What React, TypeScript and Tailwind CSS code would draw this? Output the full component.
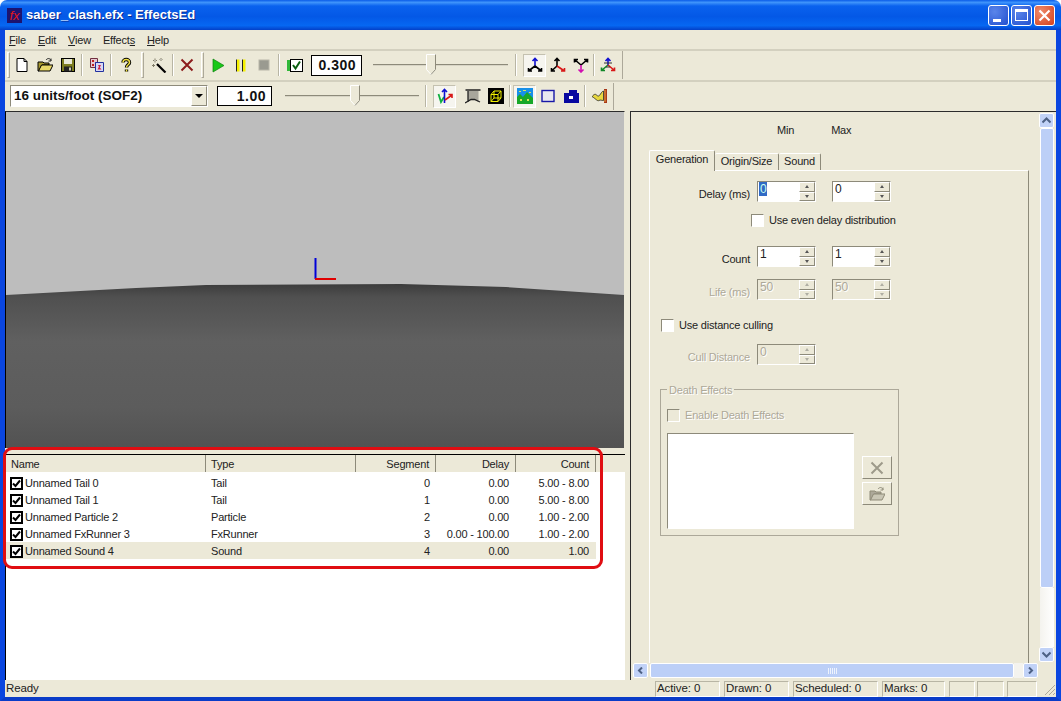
import type { ReactNode } from "react";

const disabledText = "text-[#aca899] [text-shadow:1px_1px_0_#fff]";

function Svg({ children }: { children: ReactNode }) {
  return (
    <svg width="16" height="16" viewBox="0 0 16 16" fill="none">
      {children}
    </svg>
  );
}

/* toolbar button icons */
const NewIcon = () => (
  <Svg>
    <path d="M3 1.500h7l3 3v10H3z" fill="#fff" stroke="#000" />
    <path d="M10 1.500v3h3" stroke="#000" />
  </Svg>
);
const OpenIcon = ({ gray }: { gray?: boolean }) => (
  <Svg>
    <path d="M1 14V5h5l1 1h5v2H5l-3 6z" fill={gray ? "#aca899" : "#a89a30"} stroke={gray ? "#8f8b78" : "#000"} />
    <path d="M1.500 14 4.500 8H16l-3 6z" fill={gray ? "#c9c6b5" : "#e8d868"} stroke={gray ? "#8f8b78" : "#000"} />
    <path d="M9 3c1.500-2 4-2 5 .5M14 1.500v2.500h-2.500" stroke={gray ? "#8f8b78" : "#222"} />
  </Svg>
);
const SaveIcon = () => (
  <Svg>
    <rect x="1.500" y="1.500" width="13" height="13" fill="#7d7d20" stroke="#000" />
    <rect x="4" y="2" width="8" height="5" fill="#e8e8d8" />
    <rect x="4" y="9.500" width="8" height="5" fill="#222" />
    <rect x="9" y="10.500" width="2" height="3" fill="#c8c8a8" />
  </Svg>
);
const CopyIcon = () => (
  <Svg>
    <path d="M1.500 1.500h7v9h-7z" fill="#e8c8d0" stroke="#703040" />
    <path d="M3 3h2v2H3zM6 5h1.500v2H6zM3 7h2v2H3z" fill="#c02020" />
    <path d="M6.500 5.500h8v9h-8z" fill="#d8d8f4" stroke="#2030a0" />
    <path d="M9 8h3l-1.500 3z M10 9.500l2.500 3h-4z" fill="#d02040" />
  </Svg>
);
const HelpIcon = () => (
  <Svg>
    <path d="M5 5.500C5 1.500 11.500 1.500 11.500 5.500 11.500 8 8.500 7.500 8.500 10.500M8.500 12.500v2" stroke="#000" strokeWidth="3.400" />
    <path d="M5 5.500C5 1.500 11.500 1.500 11.500 5.500 11.500 8 8.500 7.500 8.500 10.500M8.500 12.500v2" stroke="#f0e040" strokeWidth="1.500" />
  </Svg>
);
const WandIcon = () => (
  <Svg>
    <path d="M6 7l8.500 8.500" stroke="#000" strokeWidth="2.200" />
    <path d="M4 1.500v4M2 3.500h4M10 1v3M8.500 2.500h3M1 8.500h3M2.500 7v3" stroke="#807c68" />
    <path d="M4 3v1M10 2v1" stroke="#fff" />
  </Svg>
);
const CrossIcon = ({ gray }: { gray?: boolean }) => (
  <Svg>
    <path d="M2.500 2.500l11 11M13.500 2.500l-11 11" stroke={gray ? "#9d9a8a" : "#8c1c1c"} strokeWidth="2" />
  </Svg>
);
const PlayIcon = () => (
  <Svg>
    <path d="M3 2l11 6.500L3 15z" fill="#18c818" stroke="#108010" strokeWidth=".7" />
  </Svg>
);
const PauseIcon = () => (
  <Svg>
    <path d="M4 2.500h2.500v12H4zM10 2.500h2.500v12H10z" fill="#f4f000" />
    <path d="M3.500 2.500v12M9.500 2.500v12" stroke="#222" />
  </Svg>
);
const StopIcon = () => (
  <Svg>
    <rect x="3" y="3" width="10" height="10" fill="#9a9a90" stroke="#b8b6a8" />
  </Svg>
);
const CheckIcon = () => (
  <Svg>
    <rect x="0" y="3" width="5" height="11" fill="#30b838" />
    <rect x="3.500" y="2.500" width="12" height="12" fill="#fff" stroke="#000" />
    <path d="M6 8l2.500 3.500L13 4.500" stroke="#0a6010" strokeWidth="2" />
  </Svg>
);
const AxisA = () => (
  <Svg>
    <path d="M8 9V1.500M5.500 4 8 1.500 10.500 4" stroke="#1010d0" strokeWidth="1.600" />
    <path d="M8 9 1.500 14M8 9l6.500 5M1.500 11v3h3.500M14.500 11v3H11" stroke="#000" strokeWidth="1.600" />
  </Svg>
);
const AxisB = () => (
  <Svg>
    <path d="M7 9V1.500M4.500 4 7 1.500 9.500 4M7 9 1.500 14M1.500 11v3H5" stroke="#000" strokeWidth="1.600" />
    <path d="M7 9l7.500 5M14.500 11v3H11" stroke="#d81818" strokeWidth="1.600" />
  </Svg>
);
const AxisC = () => (
  <Svg>
    <path d="M8 8 1.500 2.500M8 8l6.500-5.500M1.500 5.500v-3H5M14.500 5.500v-3H11" stroke="#000" strokeWidth="1.600" />
    <path d="M8 8v7M5.500 12.500 8 15l2.500-2.500" stroke="#d010b0" strokeWidth="1.600" />
  </Svg>
);
const AxisD = () => (
  <Svg>
    <path d="M8 8V1.500M5.500 4 8 1.500 10.500 4" stroke="#1010d0" strokeWidth="1.600" />
    <path d="M8 8 1.500 13.500M1.500 10.500v3H5" stroke="#108828" strokeWidth="1.600" />
    <path d="M8 8l6.500 5.500M14.500 10.500v3H11" stroke="#d81818" strokeWidth="1.600" />
    <path d="M4 6h8M6 10h4" stroke="#333" />
  </Svg>
);
const AxisE = () => (
  <Svg>
    <path d="M1.500 6 4 14 7 9" stroke="#10b040" strokeWidth="1.800" />
    <path d="M7.500 15V1.500M5 4 7.500 1.500 10 4" stroke="#1010d0" strokeWidth="1.600" />
    <path d="M8 12l7-5M11.500 6.500H15V10" stroke="#d81818" strokeWidth="1.600" />
  </Svg>
);
const WallIcon = () => (
  <Svg>
    <path d="M3 3h10.500v11L9.500 11.500H6L3 14z" fill="#a8a69c" />
    <path d="M.5 2h15M3 3v11M0 15l6-3.500h3.500L15 14" stroke="#222" strokeWidth="1.300" />
  </Svg>
);
const BoxIcon = () => (
  <Svg>
    <rect width="16" height="16" fill="#000" />
    <path d="M3 6.500h7v7H3zM6 3h7v7H6zM3 6.500 6 3M10 6.500 13 3M10 13.500l3-3.500M3 13.500 6 10" stroke="#f0f000" />
  </Svg>
);
const LandIcon = () => (
  <Svg>
    <rect width="16" height="16" fill="#1890e8" />
    <path d="M0 9l3-3 3 3 4-5 6 6v6H0z" fill="#18a828" />
    <path d="M2 3h2v1H2zM6 2h3v1H6zM12 4h2v1h-2zM3 11h2v2H3zM10 11h2v2h-2z" fill="#d8e858" />
  </Svg>
);
const FrameIcon = () => (
  <Svg>
    <rect x="2" y="2.500" width="12" height="11" fill="#e8e8f0" stroke="#1818a8" strokeWidth="1.400" />
  </Svg>
);
const BlobIcon = () => (
  <Svg>
    <path d="M1 5h5V2h8v3h2v10H1z" fill="#0808a0" />
    <rect x="6" y="8" width="4" height="3" fill="#fff" />
  </Svg>
);
const HillIcon = () => (
  <Svg>
    <path d="M0 8.500c2-2 3-3 4.500-1.500S7 8.500 8.500 6 11 3 11.500 3v9.500c-2 0-3-1-4.500 0S4 11 0 8.500z" fill="#e8d840" stroke="#222" strokeWidth=".8" />
    <path d="M12 1h3v14h-3z" fill="#a83818" />
    <path d="M13 2v12" stroke="#e8a040" />
  </Svg>
);

function Btn({ children, pressed }: { children: ReactNode; pressed?: boolean }) {
  return (
    <div
      className={`flex h-[23px] w-[23px] shrink-0 items-center justify-center ${
        pressed ? "border border-b-white border-l-[#c4c1b0] border-r-white border-t-[#c4c1b0] bg-[#f6f5ef]" : ""
      }`}
    >
      {children}
    </div>
  );
}

function Sep({ w }: { w: string }) {
  return (
    <div className={`flex h-[22px] shrink-0 justify-center ${w}`}>
      <div className="w-[2px] border-l border-r border-l-[#b8b5a4] border-r-white" />
    </div>
  );
}

function Grip({ w }: { w: string }) {
  return (
    <div className={`flex h-[26px] shrink-0 justify-center ${w}`}>
      <div className="w-[3px] border border-b-[#aca899] border-l-white border-r-[#aca899] border-t-white" />
    </div>
  );
}

function Slider({ width, thumb }: { width: string; thumb: string }) {
  return (
    <div className={`relative flex h-[22px] shrink-0 items-center ${width}`}>
      <div className="h-[2px] w-full border-b border-t border-b-[#d8d5c6] border-t-[#8d8a7a]" />
      <svg className={`absolute top-0 ${thumb}`} width="10" height="21" viewBox="0 0 10 21">
        <path d="M.5.5h9v15l-4.500 5-4.500-5z" fill="#ece9d8" stroke="#fff" />
        <path d="M9.500.5v15l-4.500 5" stroke="#8d8a7a" fill="none" />
      </svg>
    </div>
  );
}

function ValueBox({ value, w }: { value: string; w: string }) {
  return (
    <div className={`flex shrink-0 items-center justify-end border border-black bg-white pr-[5px] text-[14px] font-bold tracking-[.5px] text-[#111] ${w}`}>
      {value}
    </div>
  );
}

function Toolbars() {
  return (
    <>
      <div className="flex h-[21px] items-start gap-[12px] border-b-2 border-b-[#d3d0bf] pl-[4px] pt-[2px] text-[11px] leading-[16px] tracking-[-.2px] text-[#222]">
        <span>
          <u>F</u>ile
        </span>
        <span>
          <u>E</u>dit
        </span>
        <span>
          <u>V</u>iew
        </span>
        <span>
          Effect<u>s</u>
        </span>
        <span>
          <u>H</u>elp
        </span>
      </div>

      <div className="flex h-[31px] items-center border-b-2 border-b-[#d3d0bf] pb-[1px] pl-[2px]">
        <Grip w="w-[3px]" />
        <Btn><NewIcon /></Btn>
        <Btn><OpenIcon /></Btn>
        <Btn><SaveIcon /></Btn>
        <Sep w="w-[6px]" />
        <Btn><CopyIcon /></Btn>
        <Sep w="w-[6px]" />
        <Btn><HelpIcon /></Btn>
        <Grip w="w-[10px]" />
        <Btn><WandIcon /></Btn>
        <Sep w="w-[5px]" />
        <Btn><CrossIcon /></Btn>
        <Grip w="w-[8px]" />
        <Btn><PlayIcon /></Btn>
        <Btn><PauseIcon /></Btn>
        <Btn><StopIcon /></Btn>
        <Sep w="w-[8px]" />
        <Btn><CheckIcon /></Btn>
        <div className="ml-[5px] flex h-[21px]">
          <ValueBox value="0.300" w="w-[51px]" />
        </div>
        <div className="ml-[11px]">
          <Slider width="w-[135px]" thumb="left-[53px]" />
        </div>
        <Sep w="w-[15px]" />
        <Btn pressed><AxisA /></Btn>
        <Btn><AxisB /></Btn>
        <Btn><AxisC /></Btn>
        <Sep w="w-[4px]" />
        <Btn><AxisD /></Btn>
        <div className="ml-[2px] h-[28px] w-[2px] border-r border-r-[#aca899]" />
      </div>

      <div className="flex h-[29px] items-center pb-[1px] pl-[5px]">
        <div className="flex h-[22px] w-[198px] shrink-0 items-center border border-b-white border-l-[#8d8a7a] border-r-white border-t-[#8d8a7a] bg-white pl-[3px] text-[13.5px] font-bold text-[#111]">
          <span className="flex-1 truncate">16 units/foot (SOF2)</span>
          <div className="flex h-[20px] w-[16px] items-center justify-center border border-b-[#8d8a7a] border-l-white border-r-[#8d8a7a] border-t-white bg-[#ece9d8]">
            <div className="border-x-[4px] border-t-[4px] border-x-transparent border-t-black" />
          </div>
        </div>
        <div className="ml-[9px] flex h-[20px]">
          <ValueBox value="1.00" w="w-[55px]" />
        </div>
        <div className="ml-[13px]">
          <Slider width="w-[134px]" thumb="left-[65px]" />
        </div>
        <Sep w="w-[14px]" />
        <Btn pressed><AxisE /></Btn>
        <div className="w-[5px]" />
        <Btn><WallIcon /></Btn>
        <Btn><BoxIcon /></Btn>
        <Sep w="w-[6px]" />
        <Btn pressed><LandIcon /></Btn>
        <Btn><FrameIcon /></Btn>
        <Btn><BlobIcon /></Btn>
        <Sep w="w-[6px]" />
        <Btn><HillIcon /></Btn>
        <div className="ml-[1px] h-[27px] w-[2px] border-r border-r-[#aca899]" />
      </div>
    </>
  );
}

function Viewport() {
  return (
    <div className="h-[337px] border-l border-r border-t border-black border-r-[#ece9d8] border-t-[#2c2c2c]">
      <svg width="618" height="336" viewBox="0 0 618 336" className="block">
        <defs>
          <linearGradient id="ground" x1="0" y1="0" x2="0" y2="1">
            <stop offset="0" stopColor="#3c3c3c" />
            <stop offset=".08" stopColor="#505050" />
            <stop offset=".35" stopColor="#606060" />
            <stop offset=".75" stopColor="#5c5c5c" />
            <stop offset="1" stopColor="#525252" />
          </linearGradient>
        </defs>
        <rect width="618" height="336" fill="#bdbdbd" />
        <path d="M0 183L130 176 200 173 395 172 500 175 618 183V336H0z" fill="url(#ground)" />
        <path d="M309.500 146v21" stroke="#0000d8" strokeWidth="2" />
        <path d="M309 167h21" stroke="#e00000" strokeWidth="2" />
      </svg>
    </div>
  );
}

const rows = [
  ["Unnamed Tail 0", "Tail", "0", "0.00", "5.00 - 8.00"],
  ["Unnamed Tail 1", "Tail", "1", "0.00", "5.00 - 8.00"],
  ["Unnamed Particle 2", "Particle", "2", "0.00", "1.00 - 2.00"],
  ["Unnamed FxRunner 3", "FxRunner", "3", "0.00 - 100.00", "1.00 - 2.00"],
  ["Unnamed Sound 4", "Sound", "4", "0.00", "1.00"],
];

function HeaderCell({ w, children, right }: { w: string; children?: ReactNode; right?: boolean }) {
  return (
    <div className={`flex h-full shrink-0 items-center border-r border-r-[#8d8a7a] pl-[5px] pr-[6px] pt-[2px] ${w} ${right ? "justify-end" : ""}`}>
      {children}
    </div>
  );
}

function EffectList() {
  return (
    <div className="relative flex min-h-0 flex-1 flex-col text-[11px] tracking-[-.2px]">
      <div className="flex h-[18px] border-l border-t border-black bg-[#ece9d8] text-[#222]">
        <HeaderCell w="w-[200px]">Name</HeaderCell>
        <HeaderCell w="w-[150px]">Type</HeaderCell>
        <HeaderCell w="w-[80px]" right>Segment</HeaderCell>
        <HeaderCell w="w-[80px]" right>Delay</HeaderCell>
        <HeaderCell w="w-[80px]" right>Count</HeaderCell>
      </div>
      <div className="flex-1 border-l border-black bg-white pt-[2px] text-[#222]">
        {rows.map((r, i) => (
          <div key={r[0]} className={`flex h-[17px] w-[590px] items-center pt-px ${i === 4 ? "bg-[#ece9d8]" : ""}`}>
            <div className="flex w-[205px] shrink-0 items-center gap-[2px] pl-[4px]">
              <div className="flex h-[13px] w-[13px] shrink-0 items-center justify-center border-2 border-black bg-white">
                <svg width="9" height="9" viewBox="0 0 9 9" fill="none">
                  <path d="M1 4.500l2.500 2.500L8 1.500" stroke="#000" strokeWidth="2" />
                </svg>
              </div>
              <span>{r[0]}</span>
            </div>
            <div className="w-[145px] shrink-0">{r[1]}</div>
            <div className="w-[74px] shrink-0 text-right">{r[2]}</div>
            <div className="w-[79px] shrink-0 text-right">{r[3]}</div>
            <div className="w-[80px] shrink-0 text-right">{r[4]}</div>
          </div>
        ))}
      </div>
      {/* red annotation around the list */}
      <div className="absolute left-[-2px] top-[-7px] h-[122px] w-[600px] rounded-[9px] border-[3px] border-[#e00d12]" />
    </div>
  );
}

function SpinBox({ value, disabled, selected }: { value: string; disabled?: boolean; selected?: boolean }) {
  return (
    <div
      className={`flex h-[21px] w-[59px] shrink-0 border border-b-white border-l-[#8d8a7a] border-r-white border-t-[#8d8a7a] ${
        disabled ? "bg-[#ece9d8]" : "bg-white"
      }`}
    >
      <div className={`flex-1 pl-[1px] text-[12px] leading-[14px] ${disabled ? disabledText : "text-[#222]"}`}>
        <span className={selected ? "bg-[#316ac5] px-px text-[#cfe]" : "px-px"}>{value}</span>
      </div>
      <div className="flex w-[16px] flex-col">
        {["border-b-[3px] border-b-[#555]", "border-t-[3px] border-t-[#555]"].map((arrow) => (
          <div
            key={arrow}
            className="flex h-1/2 items-center justify-center border border-b-[#8d8a7a] border-l-white border-r-[#8d8a7a] border-t-white bg-[#ece9d8]"
          >
            <div className={`border-x-[2px] border-x-transparent ${arrow} ${disabled ? "opacity-40" : ""}`} />
          </div>
        ))}
      </div>
    </div>
  );
}

function Check({ label, disabled }: { label: string; disabled?: boolean }) {
  return (
    <div className="flex h-[13px] items-center gap-[5px]">
      <div
        className={`h-[13px] w-[13px] shrink-0 border border-b-white border-l-[#8d8a7a] border-r-white border-t-[#8d8a7a] ${
          disabled ? "bg-[#ece9d8]" : "bg-white"
        }`}
      />
      <span className={disabled ? disabledText : "text-[#222]"}>{label}</span>
    </div>
  );
}

function SpinRow({ label, top, disabled, one, two, selected }: { label: string; top: string; disabled?: boolean; one: string; two?: string; selected?: boolean }) {
  return (
    <div className={`flex items-start ${top}`}>
      <div className={`w-[100px] pt-[6px] text-right leading-[15px] ${disabled ? disabledText : "text-[#222]"}`}>{label}</div>
      <div className="ml-[7px]">
        <SpinBox value={one} disabled={disabled} selected={selected} />
      </div>
      {two && (
        <div className="ml-[16px]">
          <SpinBox value={two} disabled={disabled} />
        </div>
      )}
    </div>
  );
}

function SmallButton({ children }: { children: ReactNode }) {
  return (
    <div className="flex h-[23px] w-[30px] items-center justify-center border border-b-[#8d8a7a] border-l-white border-r-[#8d8a7a] border-t-white bg-[#ece9d8]">
      {children}
    </div>
  );
}

function PropsPanel() {
  return (
    <div className="min-w-0 flex-1 overflow-hidden text-[11px] tracking-[-.2px]">
      <div className="flex h-[25px] items-end text-[#222]">
        <span className="ml-[146px] leading-[14px]">Min</span>
        <span className="ml-[37px] leading-[14px]">Max</span>
      </div>
      <div className="ml-[18px] mt-[14px] flex h-[19px] items-end text-[#222]">
        <div className="relative z-10 flex h-[21px] w-[66px] translate-y-[1px] items-start justify-center rounded-t-[2px] border-l border-r border-t border-l-white border-r-[#8d8a7a] border-t-white bg-[#ece9d8] pt-[1px] leading-[14px]">
          Generation
        </div>
        <div className="flex h-[17px] w-[64px] items-center justify-center rounded-t-[2px] border-r border-t border-r-[#8d8a7a] border-t-white pb-[1px]">
          Origin/Size
        </div>
        <div className="flex h-[17px] w-[42px] items-center justify-center rounded-t-[2px] border-r border-t border-r-[#8d8a7a] border-t-white pb-[1px]">
          Sound
        </div>
      </div>
      <div className="ml-[18px] h-[500px] w-[380px] border-l border-r border-t border-l-white border-r-[#8d8a7a] border-t-white">
        <SpinRow label="Delay (ms)" top="mt-[10px]" one="0" two="0" selected />
        <div className="ml-[101px] mt-[12px]">
          <Check label="Use even delay distribution" />
        </div>
        <SpinRow label="Count" top="mt-[19px]" one="1" two="1" />
        <SpinRow label="Life (ms)" top="mt-[12px]" one="50" two="50" disabled />
        <div className="ml-[11px] mt-[19px]">
          <Check label="Use distance culling" />
        </div>
        <SpinRow label="Cull Distance" top="mt-[12px]" one="0" disabled />
        <div className="relative ml-[10px] mt-[24px] h-[147px] w-[239px] border border-[#aca899] pl-[6px] pt-[19px]">
          <span className={`absolute left-[6px] top-[-8px] bg-[#ece9d8] px-[2px] ${disabledText}`}>Death Effects</span>
          <Check label="Enable Death Effects" disabled />
          <div className="mt-[11px] flex gap-[8px]">
            <div className="h-[96px] w-[187px] border border-b-white border-l-[#8d8a7a] border-r-white border-t-[#8d8a7a] bg-white" />
            <div className="mt-[23px] flex flex-col gap-[3px]">
              <SmallButton><CrossIcon gray /></SmallButton>
              <SmallButton><OpenIcon gray /></SmallButton>
            </div>
          </div>
        </div>
      </div>
    </div>
  );
}

function ScrollBtn({ d }: { d: string }) {
  return (
    <div className="flex h-[15px] w-[15px] shrink-0 items-center justify-center rounded-[2px] border border-white bg-[#c1d2f7]">
      <svg width="9" height="7" viewBox="0 0 9 7" fill="none">
        <path d={d} stroke="#4d6185" strokeWidth="2" />
      </svg>
    </div>
  );
}

function Scrollbars() {
  return (
    <div className="ml-[1px] flex h-[17px] items-start pl-[1px]">
      <ScrollBtn d="M6 0.500 3 3.500l3 3" />
      <div className="ml-[2px] flex h-[15px] w-[364px] items-center justify-center gap-px rounded-[2px] border border-white bg-[#bccff7]">
        {[0, 1, 2, 3, 4].map((i) => (
          <div key={i} className="h-[6px] w-px bg-[#eef3fd]" />
        ))}
      </div>
      <div className="h-[15px] w-[9px] bg-[#f4f3ee]" />
      <ScrollBtn d="M3 0.500 6 3.500l-3 3" />
    </div>
  );
}

function StatusPane({ w, children }: { w: string; children?: ReactNode }) {
  return (
    <div className={`flex h-[16px] shrink-0 items-center border border-b-white border-l-[#b8b5a4] border-r-white border-t-[#b8b5a4] pl-[1px] ${w}`}>
      {children}
    </div>
  );
}

export default function App() {
  return (
    <div className="flex h-[701px] w-[1061px] flex-col overflow-hidden bg-white font-['Liberation_Sans',sans-serif]">
      <div className="flex h-[30px] shrink-0 items-center rounded-t-[7px] bg-[linear-gradient(180deg,#0a5ce8_0%,#3f94fb_8%,#0a62ee_20%,#0458e6_55%,#0667f2_85%,#0340c8_100%)] pl-[7px] pr-[6px]">
        <div className="flex h-[15px] w-[15px] items-center justify-center bg-[#1c1470] text-[13px] italic leading-none text-[#e01818]">fx</div>
        <span className="ml-[4px] text-[13px] font-bold text-white [text-shadow:1px_1px_0_#0a2a90]">saber_clash.efx - EffectsEd</span>
        <div className="ml-auto flex gap-[2px]">
          <div className="flex h-[21px] w-[21px] items-end rounded-[3px] border border-white bg-[radial-gradient(circle_at_30%_30%,#5a85ea,#2250cf)] pb-[3px] pl-[4px]">
            <div className="h-[3px] w-[8px] bg-white" />
          </div>
          <div className="flex h-[21px] w-[21px] items-center justify-center rounded-[3px] border border-white bg-[radial-gradient(circle_at_30%_30%,#5a85ea,#2250cf)]">
            <div className="h-[12px] w-[13px] border border-t-[3px] border-white" />
          </div>
          <div className="flex h-[21px] w-[21px] items-center justify-center rounded-[3px] border border-white bg-[radial-gradient(circle_at_30%_30%,#ee8a6a,#d4401c)]">
            <svg width="13" height="13" viewBox="0 0 13 13" fill="none">
              <path d="M1.500 1.500l10 10M11.500 1.500l-10 10" stroke="#fff" strokeWidth="2.200" />
            </svg>
          </div>
        </div>
      </div>

      <div className="flex min-h-0 flex-1 flex-col border-x-[5px] border-b-[4px] border-x-[#0a46e0] border-b-[#0a3cc8] bg-[#ece9d8]">
        <Toolbars />

        <div className="flex h-[569px] shrink-0">
          <div className="flex w-[620px] shrink-0 flex-col">
            <Viewport />
            <div className="h-[6px] shrink-0" />
            <EffectList />
          </div>
          <div className="w-[5px] shrink-0" />
          <div className="flex w-[426px] shrink-0 flex-col border-l border-t border-[#2c2c2c]">
            <div className="flex min-h-0 flex-1">
              <PropsPanel />
              <div className="mr-[2px] flex w-[15px] shrink-0 flex-col items-center pb-[1px] pt-[1px]">
                <ScrollBtn d="M.500 5.500l4-4 4 4" />
                <div className="h-[460px] w-[14px] rounded-[2px] border border-white bg-[#bccff7]" />
                <div className="w-[14px] flex-1 bg-[linear-gradient(90deg,#f4f3ee,#fff)]" />
                <ScrollBtn d="M.500 1.500l4 4 4-4" />
              </div>
            </div>
            <Scrollbars />
          </div>
        </div>

        <div className="flex h-[17px] shrink-0 items-center text-[11.5px] tracking-[-.1px] text-[#222]">
          <span className="w-[650px] shrink-0 pl-[1px] pt-px">Ready</span>
          <StatusPane w="w-[65px]">Active: 0</StatusPane>
          <StatusPane w="w-[65px] ml-[4px]">Drawn: 0</StatusPane>
          <StatusPane w="w-[85px] ml-[4px]">Scheduled: 0</StatusPane>
          <StatusPane w="w-[63px] ml-[4px]">Marks: 0</StatusPane>
          <StatusPane w="w-[26px] ml-[4px]" />
          <StatusPane w="w-[27px] ml-[2px]" />
          <StatusPane w="w-[30px] ml-[3px]" />
          <svg width="14" height="14" viewBox="0 0 14 14" className="ml-auto" fill="none">
            <path d="M13 3 3 13M13 7l-6 6M13 11l-2 2" stroke="#aca899" />
          </svg>
        </div>
      </div>
    </div>
  );
}
